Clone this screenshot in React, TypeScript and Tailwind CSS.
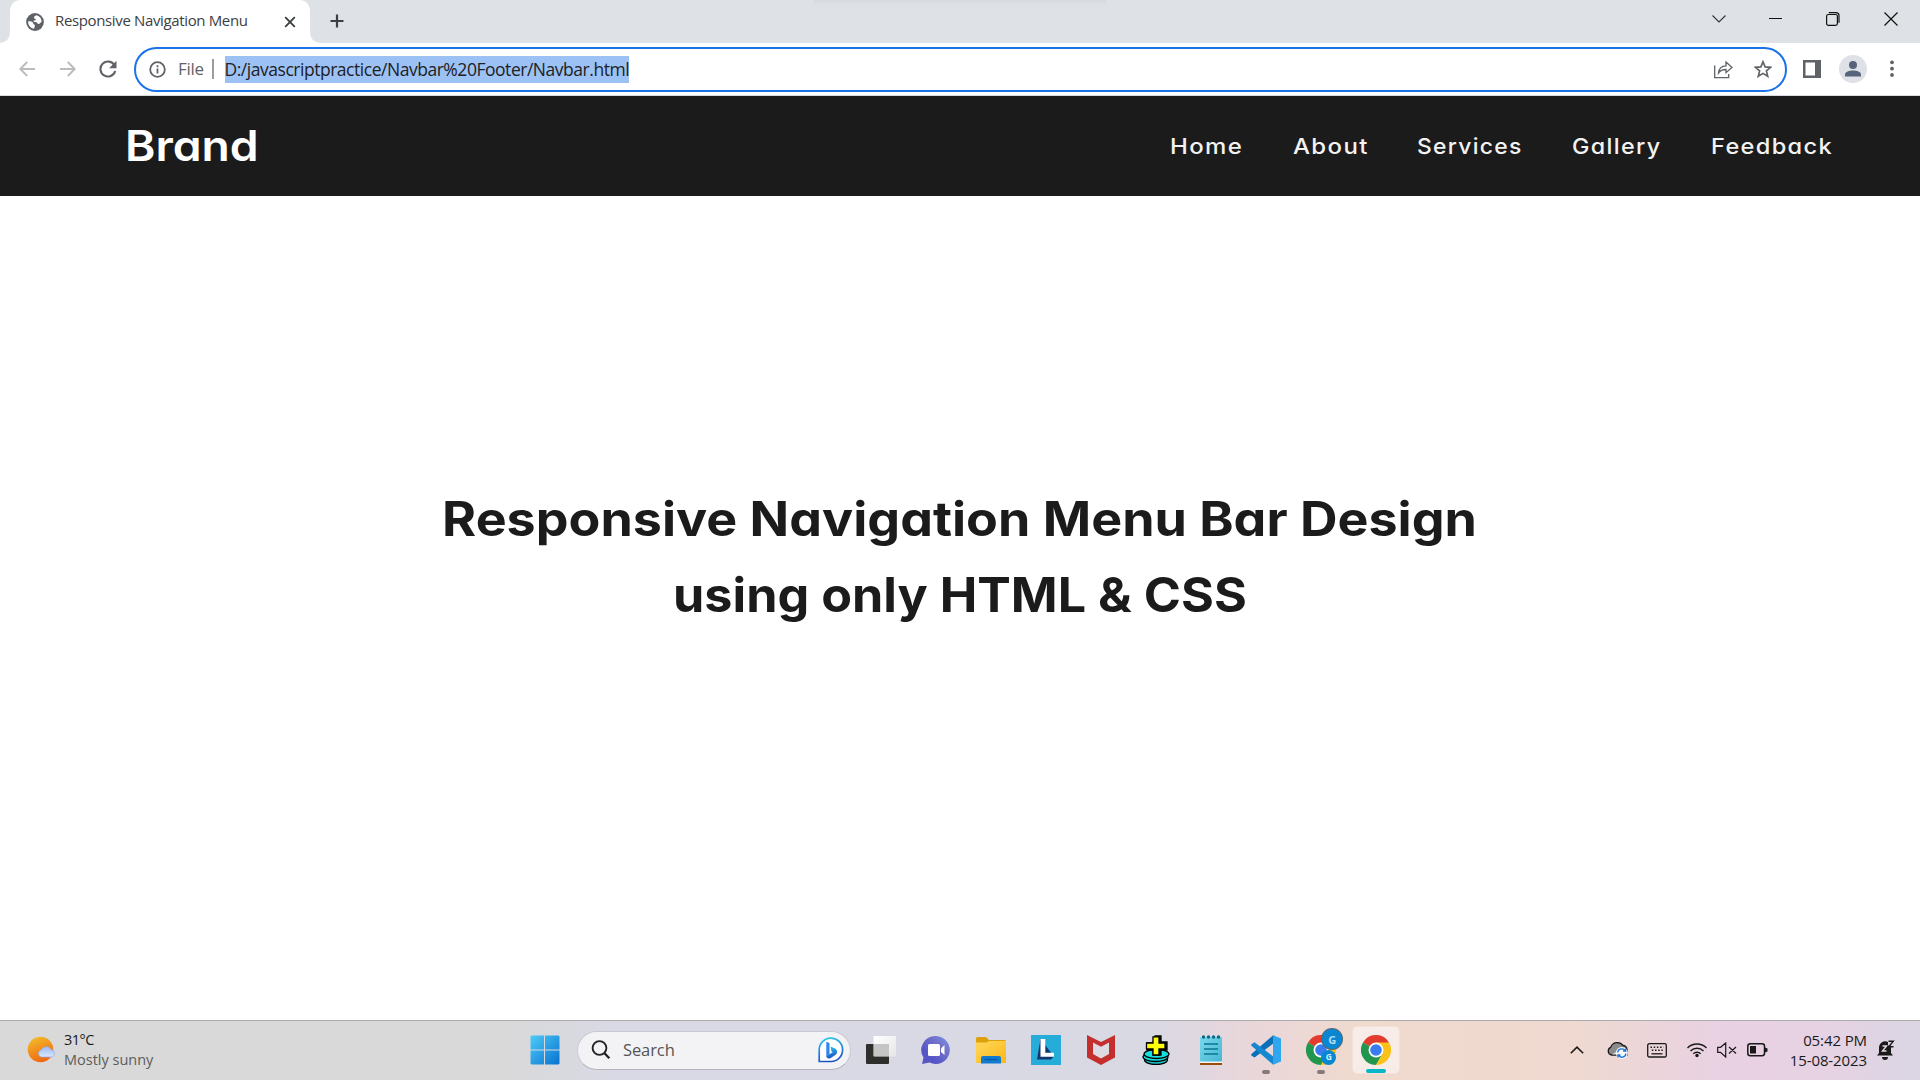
import React from "react";

const UI = "font-['Open_Sans','Noto_Sans',sans-serif]";

function Globe() {
  return (
    <svg width="18" height="18" viewBox="0 0 18 18" className="shrink-0">
      <circle cx="9" cy="9" r="8.9" fill="#5f6368" />
      <path d="M10.5 2.2c-1.8.5-2.7 1.6-2.4 2.7.3.8 1.500.6 1.700 1.500.2 1-.8 1.100-1.800 1.200-.8.1-.7 1.200.2 1.300 1.400.1 3 .1 3.300 1.300.3 1.300 1.800 1 2.400.1l1.700-1.500A7 7 0 0 0 10.500 2.200Z" fill="#fff" />
      <path d="M2.100 8.200c2.200-.1 4.300.3 4.900 1.500.5 1 .1 1.500 1.100 1.900 1 .3.8 1.300.6 2.100l-.7 2.100A7 7 0 0 1 2.100 8.200Z" fill="#fff" />
    </svg>
  );
}

function Chrome({ size = 30 }: { size?: number }) {
  return (
    <svg width={size} height={size} viewBox="0 0 30 30">
      <path d="M15 15 2 7.500A15 15 0 0 1 28 7.500Z" fill="#e33b2e" />
      <path d="M15 15 2 7.500A15 15 0 0 0 15 30l6.500-11.300Z" fill="#22964c" />
      <path d="M15 15V7.500h13A15 15 0 0 1 15 30l6.500-11.300Z" fill="#fbc116" />
      <circle cx="15" cy="15" r="7.500" fill="#fff" />
      <circle cx="15" cy="15" r="5.800" fill="#3a7cf0" />
    </svg>
  );
}

function TabStrip() {
  return (
    <div className="flex h-[43px] bg-[#dee1e6]">
      <div className="relative ml-[10px] flex h-[43px] w-[300px] items-center rounded-t-[10px] bg-white pl-[16px]">
        <Globe />
        <span className="mb-[3px] ml-[11px] w-[194px] whitespace-nowrap text-[15px] leading-[20px] tracking-[-0.36px] text-[#3c4043]">
          Responsive Navigation Menu
        </span>
        <svg width="12" height="12" viewBox="0 0 12 12" className="ml-[35px]">
          <path d="m1.200 1.200 9.600 9.600m0-9.600-9.600 9.600" stroke="#3c4043" strokeWidth="1.900" />
        </svg>
        <svg width="10" height="10" className="absolute bottom-0 -left-[10px]">
          <path d="M10 0v10H0A10 10 0 0 0 10 0Z" fill="#fff" />
        </svg>
        <svg width="10" height="10" className="absolute -right-[10px] bottom-0">
          <path d="M0 0v10h10A10 10 0 0 1 0 0Z" fill="#fff" />
        </svg>
      </div>
      <svg width="16" height="16" viewBox="0 0 16 16" className="mt-[13px] ml-[19px]">
        <path d="M8 1.500v13M1.500 8h13" stroke="#3c4043" strokeWidth="2.200" />
      </svg>
      <div className="ml-[469px] h-[6px] w-[292px] bg-[linear-gradient(180deg,#d6dade,#dee1e6)]" />
      <div className="mt-[12px] ml-auto flex h-[14px] items-center pr-[22px]">
        <svg width="14" height="14" viewBox="0 0 14 14">
          <path d="m.5 3.500 6.500 6.500 6.500-6.500" fill="none" stroke="#333" strokeWidth="1.100" />
        </svg>
        <svg width="13" height="14" viewBox="0 0 13 14" className="ml-[43px]">
          <path d="M0 6.500h13" stroke="#111" />
        </svg>
        <svg width="14" height="14" viewBox="0 0 14 14" className="ml-[44px]">
          <rect x=".6" y="2.500" width="10.800" height="10.800" rx="1.800" fill="none" stroke="#111" strokeWidth="1.200" />
          <path d="M2.800 .6h7.200a3 3 0 0 1 3 3v7.200" fill="none" stroke="#111" strokeWidth="1.200" />
        </svg>
        <svg width="14" height="14" viewBox="0 0 14 14" className="ml-[44px]">
          <path d="m.5.5 13 13m0-13-13 13" stroke="#111" strokeWidth="1.200" />
        </svg>
      </div>
    </div>
  );
}

function Toolbar() {
  return (
    <div className="flex h-[53px] items-center border-b border-[#d9dbde] bg-white">
      <svg width="16" height="16" viewBox="0 0 16 16" className="ml-[19px]">
        <path d="M16 8H1.500M8.200 1 1.300 8l6.900 7" fill="none" stroke="#babcbe" strokeWidth="1.900" />
      </svg>
      <svg width="16" height="16" viewBox="0 0 16 16" className="ml-[25px]">
        <path d="M0 8h14.500M7.800 1l6.900 7-6.900 7" fill="none" stroke="#babcbe" strokeWidth="1.900" />
      </svg>
      <svg width="18" height="18" viewBox="0 0 18 18" className="ml-[23px]">
        <path d="M15.600 5.500A7.500 7.500 0 1 0 16.200 11" fill="none" stroke="#5f6368" strokeWidth="2.100" />
        <path d="M17.500.8v7.400h-7.400Z" fill="#5f6368" />
      </svg>
      <div className="ml-[17px] flex h-[45px] w-[1653px] items-center rounded-full border-[2.500px] border-[#1a73e8] bg-white">
        <svg width="17" height="17" viewBox="0 0 17 17" className="ml-[13px]">
          <circle cx="8.500" cy="8.500" r="7.300" fill="none" stroke="#5f6368" strokeWidth="1.800" />
          <path d="M8.500 7.500v5M8.500 4.300v1.900" stroke="#5f6368" strokeWidth="1.800" />
        </svg>
        <span className="ml-[12px] w-[26px] text-[17px] leading-[24px] tracking-[-0.3px] text-[#5f6368]">File</span>
        <span className="ml-[8px] h-[20px] w-[1.500px] bg-[#9b9da1]" />
        <span className="ml-[11px] h-[27px] w-[404px] whitespace-nowrap bg-[#9cc2f5] text-[17.500px] leading-[26px] tracking-[-0.470px] text-[#202124]">
          D:/javascriptpractice/Navbar%20Footer/Navbar.html
        </span>
        <div className="ml-auto flex items-center gap-[21px] pr-[13px]">
          <svg width="19" height="19" viewBox="0 0 19 19" fill="none" stroke="#5f6368" strokeWidth="1.300">
            <path d="M.7 5.500v12.200h14V14" />
            <path d="M4.500 13c.3-4.500 3.200-7 7.500-7.200V2l6 5.500-6 5.200V9.500c-3.400 0-5.700 1-7.500 3.500Z" />
          </svg>
          <svg width="18" height="18" viewBox="0 0 18 18">
            <path d="m9 1.800 2.100 5.100 5.500.4-4.200 3.600 1.300 5.400L9 13.400l-4.700 2.900 1.300-5.400-4.200-3.600 5.500-.4Z" fill="none" stroke="#5f6368" strokeWidth="1.700" />
          </svg>
        </div>
      </div>
      <svg width="18" height="18" viewBox="0 0 18 18" className="ml-[16px]">
        <path d="M0 0h18v18H0Zm2.500 2.500v13H12v-13Z" fill="#5f6368" fillRule="evenodd" />
      </svg>
      <svg width="28" height="28" viewBox="0 0 28 28" className="ml-[18px]">
        <circle cx="14" cy="14" r="14" fill="#dee1e6" />
        <circle cx="14" cy="10" r="4" fill="#56637a" />
        <path d="M6 21.500v-2c0-2.700 4.500-4 8-4s8 1.300 8 4v2Z" fill="#56637a" />
      </svg>
      <svg width="4" height="18" viewBox="0 0 4 18" fill="#5f6368" className="ml-[23px]">
        <circle cx="2" cy="2.300" r="1.900" />
        <circle cx="2" cy="8.700" r="1.900" />
        <circle cx="2" cy="15" r="1.900" />
      </svg>
    </div>
  );
}

const links = [
  { label: "Home", box: "w-[74px] scale-x-[1.09]" },
  { label: "About", box: "w-[75px] scale-x-[1.09]" },
  { label: "Services", box: "w-[106px] scale-x-[1.04]" },
  { label: "Gallery", box: "w-[90px] scale-x-[1.06]" },
  { label: "Feedback", box: "w-[122px] scale-x-[1.072]" },
];

function Page() {
  return (
    <div className="flex h-[924px] flex-col bg-white font-['Inter',sans-serif] [font-feature-settings:'cv11']">
      <nav className="flex h-[100px] shrink-0 items-center bg-[#1b1b1b] pl-[125px]">
        <span className="origin-left scale-x-[1.087] text-[42.500px] leading-[60px] font-semibold text-white">Brand</span>
        <div className="mr-[87px] ml-auto flex gap-[49px]">
          {links.map((l) => (
            <span key={l.label} className={"origin-left text-[22px] leading-[30px] font-medium tracking-[1.250px] whitespace-nowrap text-[#f2f2f2] " + l.box}>
              {l.label}
            </span>
          ))}
        </div>
      </nav>
      <h1 className="mt-[285px] flex flex-col items-center text-[47.500px] leading-[76px] font-bold whitespace-nowrap text-[#1b1b1b]">
        <span className="scale-x-[1.095]">Responsive Navigation Menu Bar Design</span>
        <span className="scale-x-[1.059]">using only HTML &amp; CSS</span>
      </h1>
    </div>
  );
}

function Weather() {
  return (
    <svg width="30" height="28" viewBox="0 0 30 28">
      <defs>
        <linearGradient id="sun" x1="0.200" y1="0" x2="0.600" y2="1">
          <stop offset="0" stopColor="#f2bd2c" />
          <stop offset="1" stopColor="#f0650f" />
        </linearGradient>
        <linearGradient id="cloud" x1="0" y1="0" x2="0" y2="1">
          <stop offset="0" stopColor="#9db9f4" />
          <stop offset="1" stopColor="#dbe8fd" />
        </linearGradient>
      </defs>
      <circle cx="13.500" cy="13.500" r="12.800" fill="url(#sun)" />
      <path d="M14.500 21a3.700 3.700 0 0 1 .2-7.300 5.200 5.200 0 0 1 9.400 0 3.700 3.700 0 0 1 .5 7.300Z" fill="url(#cloud)" stroke="#8eaaf0" strokeWidth=".7" />
    </svg>
  );
}

function SearchBox() {
  return (
    <div className="ml-[17px] flex h-[39px] w-[274px] items-center rounded-full border border-[#c9c9d3] border-b-[#b5b5bd] bg-[#f3f3f6]">
      <svg width="20" height="20" viewBox="0 0 20 20" className="ml-[13px]">
        <circle cx="8.500" cy="8" r="6.900" fill="none" stroke="#222" strokeWidth="1.900" />
        <path d="m13.300 13 5 5.300" stroke="#222" strokeWidth="2.300" />
      </svg>
      <span className="ml-[12px] text-[16.500px] leading-[22px] tracking-[-0.1px] text-[#555]">Search</span>
      <svg width="26" height="26" viewBox="0 0 26 26" className="mr-[6px] ml-auto">
        <defs>
          <linearGradient id="bing" x1="0.300" y1="0" x2="0.500" y2="1">
            <stop offset="0" stopColor="#2cc3ee" />
            <stop offset="1" stopColor="#1b4fc4" />
          </linearGradient>
        </defs>
        <path d="M1.200 24.500V13A11.700 11.700 0 1 1 13 24.500Z" fill="#fff" stroke="url(#bing)" strokeWidth="1.700" />
        <path d="m8.300 4.800 3.200 1.200v11L8.300 19.600Z" fill="#2c86f0" />
        <path d="m12.500 9.500 4.500 2c3 1.800 2.500 5.200.3 6.600l-5 3.100c-2 .8-4-.3-4-2.200l4.800-2.800 1.700-1-1.300-.8Z" fill="url(#bing)" />
      </svg>
    </div>
  );
}

function Cell({ children, dot }: { children: React.ReactNode; dot?: boolean }) {
  return (
    <div className="relative flex h-[48px] w-[55.100px] items-center justify-center">
      {children}
      {dot && <span className="absolute bottom-0 left-[23.500px] h-[4px] w-[8px] rounded-full bg-[#85797a]" />}
    </div>
  );
}

function Apps() {
  return (
    <>
      <Cell>
        <svg width="30" height="30" viewBox="0 0 30 30">
          <defs>
            <linearGradient id="pane" x1="0" y1="0" x2="1" y2="1">
              <stop offset="0" stopColor="#fff" />
              <stop offset="1" stopColor="#e6e6e8" />
            </linearGradient>
          </defs>
          <rect x="0" y="9" width="23" height="20" rx="1" fill="#2e2f2d" />
          <rect x="7.500" y="1" width="22.500" height="20.500" rx="1" fill="url(#pane)" />
          <path d="M8 9h15v12H8Z" fill="#c5c5c5" />
        </svg>
      </Cell>
      <Cell>
        <svg width="30" height="30" viewBox="0 0 30 30">
          <defs>
            <linearGradient id="chat" x1="1" y1="0" x2="0.300" y2="0.700">
              <stop offset="0" stopColor="#739bf5" />
              <stop offset=".45" stopColor="#7473c9" />
              <stop offset="1" stopColor="#5756c7" />
            </linearGradient>
          </defs>
          <path d="M15 1a14 14 0 1 1-6.500 26.500L1 29l1.500-6.500A14 14 0 0 1 15 1Z" fill="url(#chat)" />
          <rect x="7" y="9" width="12" height="12" rx="1.500" fill="#fff" />
          <path d="M20 13.500 23.500 10v10L20 17Z" fill="#fff" />
        </svg>
      </Cell>
      <Cell>
        <svg width="30" height="30" viewBox="0 0 30 30">
          <defs>
            <linearGradient id="folder" x1="0" y1="0" x2="1" y2="1">
              <stop offset="0" stopColor="#ffd85c" />
              <stop offset="1" stopColor="#fcb716" />
            </linearGradient>
          </defs>
          <path d="M0 3.500Q0 2 1.500 2h8.500l3 3H28.500Q30 5 30 6.500V10H0Z" fill="#dfa10b" />
          <path d="M0 7.500h10.500L13 6h17v22H0Z" fill="url(#folder)" />
          <path d="M5 28.500V23q0-2 2-2h16q2 0 2 2v5.500Z" fill="#127bce" />
          <path d="M8.500 24.500h13" stroke="#0759a5" strokeWidth="1.200" />
        </svg>
      </Cell>
      <Cell>
        <svg width="30" height="30" viewBox="0 0 30 30">
          <path d="M0 0h30v30H0Z" fill="#26acd8" />
          <path d="M9.500 4 6 24.500h14l3-3Z" fill="#12366e" />
          <path d="M9.500 4h4.800v13.800H23v4H9.500Z" fill="#fff" />
        </svg>
      </Cell>
      <Cell>
        <svg width="28" height="30" viewBox="0 0 28 30">
          <path d="m0 0 14 7L28 0v22.500L14 30 0 22.500Z" fill="#c42f2e" />
          <path d="m6 7.500 8 4.200 8-4.200V19l-8 4.500L6 19Z" fill="#dcdbe3" />
        </svg>
      </Cell>
      <Cell>
        <svg width="30" height="30" viewBox="0 0 30 30" stroke="#000" strokeWidth="1.300">
          <ellipse cx="15" cy="25" rx="11.500" ry="4.500" fill="#16c7c8" />
          <ellipse cx="14.500" cy="22" rx="12.500" ry="4.500" fill="#16dfe0" />
          <ellipse cx="15.500" cy="19" rx="12.500" ry="4.500" fill="#16dfe0" />
          <path d="M14 1h6v6h6v8h-6v5h-8v-5H6V8h6Z" fill="#111" />
          <path d="M12 1.800h6V8h6v6h-6v6h-6v-6H5.500V8H12Z" fill="#ffff08" />
        </svg>
      </Cell>
      <Cell>
        <svg width="22" height="30" viewBox="0 0 22 30">
          <defs>
            <linearGradient id="note" x1="0" y1="0" x2="1" y2="1">
              <stop offset="0" stopColor="#7ad8ec" />
              <stop offset="1" stopColor="#46b7d2" />
            </linearGradient>
          </defs>
          <path d="M0 24h22v6H0Z" fill="#9c4b08" />
          <path d="M0 24h22v4H0Z" fill="#f3f4f4" />
          <rect y="2" width="22" height="24.500" rx="1" fill="url(#note)" />
          <path d="M4 9h14M4 14h14M4 19h14" stroke="#087591" strokeWidth="1.700" />
          <g fill="#0b6a87">
            <circle cx="3.500" cy="2" r="1.700" />
            <circle cx="8.500" cy="2" r="1.700" />
            <circle cx="13.500" cy="2" r="1.700" />
            <circle cx="18.500" cy="2" r="1.700" />
          </g>
        </svg>
      </Cell>
      <Cell dot>
        <svg width="30" height="30" viewBox="0 0 30 30">
          <path d="m22.500 0 .5 8L3.500 22.500.7 20.700q-1-1 0-2Z" fill="#0a70b8" />
          <path d="M22.500 30 23 22 3.500 7.200.7 9q-1 1 0 2Z" fill="#1688d2" />
          <path d="M22 .2 30 3.500v23L22 29.800Z" fill="#2fa6ee" />
        </svg>
      </Cell>
      <Cell dot>
        <div className="relative h-[30px] w-[30px]">
          <Chrome />
          <span className="absolute -top-[6px] left-[16px] flex h-[20px] w-[20px] items-center justify-center rounded-full bg-[#0987d2] text-[11px] leading-none font-bold text-[#b5dcf3] ring-1 ring-[#526a78]">
            G
          </span>
          <span className="absolute top-[15px] left-[15px] flex h-[15px] w-[15px] items-center justify-center rounded-full bg-[#0987d2] text-[8.500px] leading-none font-bold text-[#d8effb]">
            G
          </span>
        </div>
      </Cell>
      <div className="relative flex h-[48px] w-[48px] translate-x-[3px] items-center justify-center rounded-[5px] border border-[#f1e1dc] bg-[#f7ece7]">
        <Chrome />
        <span className="absolute bottom-0 left-[13px] h-[4px] w-[20px] rounded-full bg-[#06b7c7]" />
      </div>
    </>
  );
}

function Tray() {
  return (
    <>
      <svg width="14" height="8" viewBox="0 0 14 8" className="ml-auto">
        <path d="m.8 7.200 6.200-6 6.200 6" fill="none" stroke="#1a1a1a" strokeWidth="1.600" />
      </svg>
      <svg width="21" height="18" viewBox="0 0 21 18" className="ml-[23px]">
        <path d="M4.500 14a4 4 0 0 1-.8-7.600A7 7 0 0 1 16 4.500a4 4 0 0 1 4 4V14Z" fill="#8b8b8b" stroke="#1a1a1a" strokeWidth="1.300" />
        <path d="M5 13.500 14 7.500l5 3v3Z" fill="#d8d8d8" />
        <circle cx="14.800" cy="12" r="6" fill="#f8f8fa" />
        <path d="M10.700 11.500a4.100 4.100 0 0 1 7.600-1.600m.6 2.700a4.100 4.100 0 0 1-7.600 1.600M18.700 7.500V10h-2.600M10.900 16.600V14h2.600" fill="none" stroke="#1a73d8" strokeWidth="1.300" />
      </svg>
      <svg width="20" height="15" viewBox="0 0 20 15" className="ml-[19px]">
        <rect x=".7" y=".7" width="18.600" height="13.300" rx="1.600" fill="none" stroke="#1a1a1a" strokeWidth="1.300" />
        <path d="M3.500 4.300h13M4.800 7.300h11" stroke="#1a1a1a" strokeWidth="1.500" strokeDasharray="1.500 1.700" />
        <path d="M4.500 10.800h11" stroke="#1a1a1a" strokeWidth="1.300" />
      </svg>
      <svg width="20" height="16" viewBox="0 0 20 16" fill="none" stroke="#1a1a1a" strokeWidth="1.500" className="ml-[20px]">
        <path d="M.5 6a13.300 13.300 0 0 1 19 0M3.500 9a9.200 9.200 0 0 1 13 0M6.300 11.800a5.200 5.200 0 0 1 7.400 0" />
        <circle cx="10" cy="13.500" r="1.700" fill="#1a1a1a" stroke="none" />
      </svg>
      <svg width="20" height="16" viewBox="0 0 20 16" fill="none" stroke="#1a1a1a" strokeWidth="1.200" className="ml-[10px]">
        <path d="M.7 5.300v5h2.800L8.700 15V1L3.500 5.300ZM12 5l7 6.500M19 5l-7 6.500" />
      </svg>
      <svg width="21" height="14" viewBox="0 0 21 14" className="ml-[10px]">
        <rect x=".8" y=".8" width="16.700" height="12" rx="2.500" fill="none" stroke="#1a1a1a" strokeWidth="1.500" />
        <path d="M3 3h6v7.600H3ZM18 4.500l2.500 1v3L18 9.500Z" fill="#1a1a1a" />
      </svg>
      <div className="mb-[1px] ml-[17px] flex w-[82px] flex-col items-end text-[15px] leading-[20px] tracking-[-0.1px] whitespace-nowrap text-[#1a1a1a]">
        <span>05:42 PM</span>
        <span>15-08-2023</span>
      </div>
      <svg width="18" height="20" viewBox="0 0 18 20" className="mr-[25px] ml-[10px]">
        <path d="M0 15.500 2 13V7.500a6.200 6.200 0 0 1 9-5.500v3.500h3V13l2 2.500Z" fill="#1a1a1a" />
        <path d="M5 17h6a3 3 0 0 1-6 0Z" fill="#1a1a1a" />
        <path d="M5.500 6h4l-4 5h4" fill="none" stroke="#ead8e6" strokeWidth="1.400" />
        <path d="M11.500 1.200h4.800l-4.600 5.600h4.800" fill="none" stroke="#1a1a1a" strokeWidth="1.400" />
      </svg>
    </>
  );
}

function Taskbar() {
  return (
    <div className="flex h-[60px] items-center border-t border-[#ababae] bg-[linear-gradient(90deg,#d9d9d9_0%,#d9d9d9_26%,#d8d9e4_32%,#d9d9e4_60%,#e9d6da_65%,#f0dace_71%,#efd9d0_82%,#e8d1e3_90%,#e6d2e3_95%,#dad6e3_100%)] pb-[1px]">
      <div className="flex w-[530px] items-center pl-[27px]">
        <Weather />
        <div className="mb-[1px] ml-[7px] flex flex-col text-[14.500px] leading-[20px] whitespace-nowrap">
          <span className="tracking-[-0.5px] text-[#1a1a1a]">31°C</span>
          <span className="text-[#5c5c5c]">Mostly sunny</span>
        </div>
      </div>
      <svg width="30" height="30" viewBox="0 0 30 30">
        <defs>
          <linearGradient id="win" x1="0" y1="0" x2="30" y2="30" gradientUnits="userSpaceOnUse">
            <stop offset="0" stopColor="#4fcdfb" />
            <stop offset="1" stopColor="#0670cd" />
          </linearGradient>
        </defs>
        <path d="M1.500.5H14v14H.5v-13ZM15 .5h13.500l1 1v13H15ZM.5 15.500H14v14H1.500l-1-1ZM15 15.500h14.500v13l-1 1H15Z" fill="url(#win)" />
      </svg>
      <SearchBox />
      <div className="ml-[2px] flex">
        <Apps />
      </div>
      <Tray />
    </div>
  );
}

export default function App() {
  return (
    <div className={"flex h-[1080px] w-[1920px] flex-col overflow-hidden bg-white " + UI}>
      <TabStrip />
      <Toolbar />
      <Page />
      <Taskbar />
    </div>
  );
}
